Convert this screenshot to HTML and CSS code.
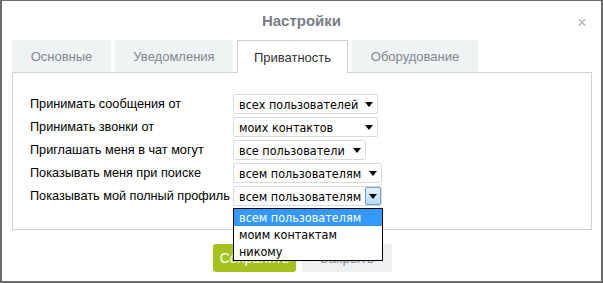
FILE: index.html
```html
<!DOCTYPE html>
<html lang="ru">
<head>
    <meta charset="UTF-8">
    <title>Настройки</title>
    <link rel="stylesheet" href="styles.css">
</head>
<body>
    <div class="dialog">
        <div class="dialog-header">
            <h1>Настройки</h1>
            <span class="close">&times;</span>
        </div>

        <div class="tabs">
            <div class="tab">Основные</div>
            <div class="tab">Уведомления</div>
            <div class="tab active">Приватность</div>
            <div class="tab">Оборудование</div>
        </div>

        <div class="panel">
            <div class="form-row">
                <label>Принимать сообщения от</label>
                <div class="select w1"><span>всех пользователей</span><i class="arrow"></i></div>
            </div>
            <div class="form-row">
                <label>Принимать звонки от</label>
                <div class="select w1"><span>моих контактов</span><i class="arrow"></i></div>
            </div>
            <div class="form-row">
                <label>Приглашать меня в чат могут</label>
                <div class="select w2"><span>все пользователи</span><i class="arrow"></i></div>
            </div>
            <div class="form-row">
                <label>Показывать меня при поиске</label>
                <div class="select w3"><span>всем пользователям</span><i class="arrow"></i></div>
            </div>
            <div class="form-row">
                <label>Показывать мой полный профиль</label>
                <div class="select w3 open">
                    <span>всем пользователям</span><i class="arrow"></i>
                    <ul class="options">
                        <li class="selected">всем пользователям</li>
                        <li>моим контактам</li>
                        <li>никому</li>
                    </ul>
                </div>
            </div>
        </div>

        <div class="buttons">
            <button class="btn btn-save">Сохранить</button>
            <button class="btn btn-close">Закрыть</button>
        </div>
    </div>
</body>
</html>
```

FILE: styles.css
```css
body {
    margin: 0;
    background-color: #fff;
    font-family: "Liberation Sans", Arial, sans-serif;
}

.dialog {
    width: 603px;
    height: 283px;
    box-sizing: border-box;
    border: 2px solid #6b6b6b;
    border-top-width: 1px;
    background-color: #fff;
}

.dialog-header {
    position: relative;
    height: 39px;
    display: flex;
    align-items: center;
    justify-content: center;
}

h1 {
    margin: 0;
    font-size: 15px;
    font-weight: bold;
    color: #787d83;
}

.close {
    position: absolute;
    right: 14px;
    top: 12px;
    font-size: 17px;
    color: #b3b7bb;
}

.tabs {
    display: flex;
    gap: 4px;
    padding-left: 10px;
    height: 33px;
}

.tab {
    display: flex;
    align-items: center;
    justify-content: center;
    font-size: 13px;
    color: #80878e;
    background-color: #f0f3f4;
    height: 32px;
}

.tab:nth-child(1) { width: 99px; }
.tab:nth-child(2) { width: 118px; }
.tab:nth-child(3) { width: 111px; }
.tab:nth-child(4) { width: 126px; }

.tab.active {
    background-color: #fff;
    color: #333;
    border: 1px solid #cfcfcf;
    border-bottom: none;
    position: relative;
    z-index: 1;
    height: 33px;
    box-sizing: border-box;
}

.panel {
    margin: -1px 9px 0 10px;
    height: 158px;
    box-sizing: border-box;
    border: 1px solid #d2d2d2;
    padding: 21px 0 0 17px;
    display: flex;
    flex-direction: column;
    gap: 3px;
}

.form-row {
    display: flex;
    align-items: center;
    height: 20px;
}

.form-row label {
    flex: none;
    width: 203px;
    white-space: nowrap;
    font-size: 12.7px;
    color: #000;
}

.select {
    flex: none;
    position: relative;
    height: 20px;
    box-sizing: border-box;
    border: 1px solid #d9d9d9;
    border-radius: 2px;
    display: flex;
    align-items: center;
    justify-content: space-between;
    padding-left: 5px;
    font-family: "DejaVu Sans Condensed", "DejaVu Sans", Verdana, sans-serif;
    font-stretch: condensed;
    font-size: 12.5px;
    color: #000;
    white-space: nowrap;
}

.select > span {
    overflow: hidden;
}

.w1 { width: 145px; }
.w2 { width: 133px; }
.w3 { width: 149px; }

.arrow {
    flex: none;
    width: 16px;
    height: 18px;
    display: flex;
    align-items: center;
    justify-content: center;
}

.arrow::after {
    content: "";
    border-left: 4px solid transparent;
    border-right: 4px solid transparent;
    border-top: 5px solid #000;
}

.open .arrow {
    box-sizing: border-box;
    height: 18px;
    border: 1px solid #6ca0cc;
    border-radius: 2px;
    background: linear-gradient(#e3f1fb, #b9dcf5);
}

.options {
    position: absolute;
    top: 21px;
    left: -1px;
    width: 150px;
    margin: 0;
    padding: 0;
    list-style: none;
    background-color: #fff;
    border: 1px solid #000;
    box-sizing: border-box;
    z-index: 5;
}

.options li {
    height: 17px;
    line-height: 17px;
    padding-left: 5px;
}

.options li.selected {
    background-color: #3399ff;
    color: #fff;
}

.buttons {
    display: flex;
    justify-content: center;
    gap: 6px;
    margin-top: 14px;
    padding-left: 2px;
}

.btn {
    height: 28px;
    border: none;
    border-radius: 3px;
    font-family: "Liberation Sans", Arial, sans-serif;
    font-size: 14px;
}

.btn-save {
    width: 83px;
    background-color: #a5c21f;
    color: #fff;
}

.btn-close {
    width: 90px;
    background-color: #eeeff1;
    color: #8a8f95;
}
```
